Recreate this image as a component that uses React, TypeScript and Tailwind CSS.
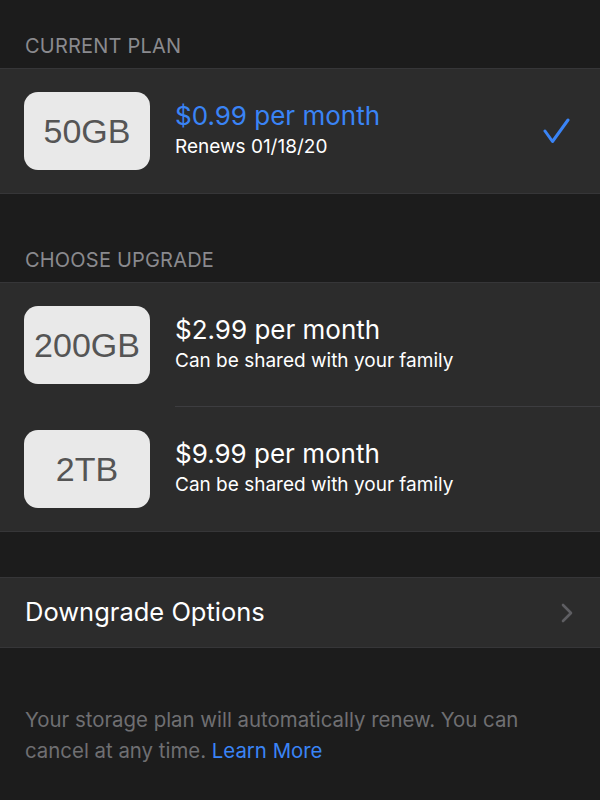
import React from "react";

const Badge = ({ label }: { label: string }) => (
  <div className="w-[126px] h-[78px] shrink-0 rounded-[14px] bg-[#e9e9e9] flex items-center justify-center text-[34px] text-[#555555] font-['Liberation_Sans',Arial,sans-serif]">
    {label}
  </div>
);

const SectionHeader = ({ title, height }: { title: string; height: string }) => (
  <div className={`${height} flex items-end px-[25px] pb-[10px] text-[20px] leading-[24px] text-[#8a8a8e] tracking-[0.2px]`}>
    {title}
  </div>
);

const PlanRow = ({
  size,
  price,
  sub,
  active,
  divider,
}: {
  size: string;
  price: string;
  sub: string;
  active?: boolean;
  divider?: boolean;
}) => (
  <div className="flex items-center h-[124px] pl-[24px]">
    <Badge label={size} />
    <div
      className={`flex-1 h-full flex items-center ml-[25px] pr-[30px] ${
        divider ? "border-b border-[#3d3d40]" : ""
      }`}
    >
      <div className="flex-1">
        <div className={`text-[26px] leading-[32px] ${active ? "text-[#3a84f6]" : "text-white"}`}>{price}</div>
        <div className="text-[19px] leading-[30px] text-white">{sub}</div>
      </div>
      {active && (
        <svg width="28" height="26" viewBox="0 0 28 26">
          <polyline
            points="3,13 10.5,23.5 26,2"
            fill="none"
            stroke="#3a84f6"
            strokeWidth="3"
            strokeLinecap="round"
            strokeLinejoin="round"
          />
        </svg>
      )}
    </div>
  </div>
);

export default function App() {
  return (
    <div className="w-[600px] h-[800px] bg-[#1c1c1c] font-['Inter','Noto_Sans',sans-serif] overflow-hidden">
      <SectionHeader title="CURRENT PLAN" height="h-[68px]" />
      <div className="bg-[#2c2c2c] border-y border-[#363638]">
        <PlanRow size="50GB" price="$0.99 per month" sub="Renews 01/18/20" active />
      </div>

      <SectionHeader title="CHOOSE UPGRADE" height="h-[88px]" />
      <div className="bg-[#2c2c2c] border-y border-[#363638]">
        <PlanRow size="200GB" price="$2.99 per month" sub="Can be shared with your family" divider />
        <PlanRow size="2TB" price="$9.99 per month" sub="Can be shared with your family" />
      </div>

      <div className="h-[45px]" />
      <div className="bg-[#2c2c2c] border-y border-[#363638] h-[71px] flex items-center pl-[25px] pr-[27px]">
        <div className="flex-1 text-[25.5px] text-white">Downgrade Options</div>
        <svg width="12" height="20" viewBox="0 0 12 20">
          <polyline
            points="2,2 10,10 2,18"
            fill="none"
            stroke="#5e5e62"
            strokeWidth="2.6"
            strokeLinecap="round"
            strokeLinejoin="round"
          />
        </svg>
      </div>

      <div className="px-[25px] pt-[56px] text-[20.4px] leading-[31px] text-[#6f6f72]">
        Your storage plan will automatically renew. You can cancel at any time.{" "}
        <span className="text-[#3a84f6]">Learn More</span>
      </div>
    </div>
  );
}
